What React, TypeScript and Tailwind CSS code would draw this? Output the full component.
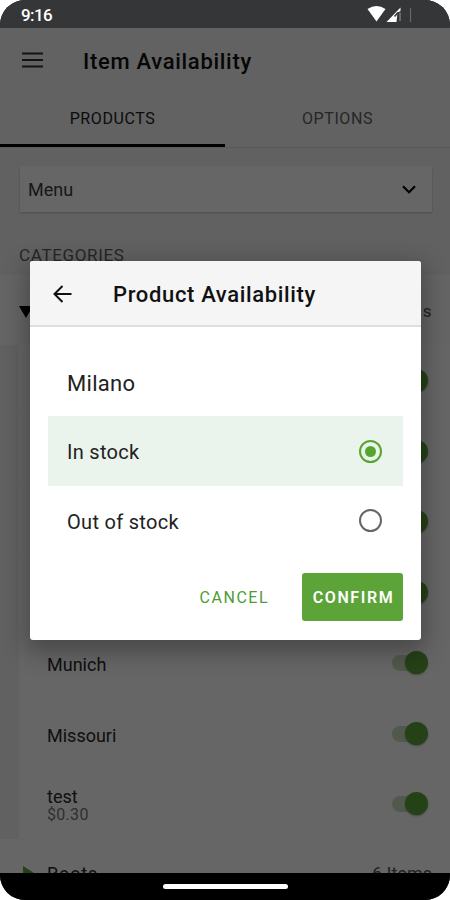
import { useState } from "react";
import clsx from "clsx";

const products = [
  { id: 1 },
  { id: 2 },
  { id: 3 },
  { id: 4 },
  { id: 5, name: "Munich" },
  { id: 6, name: "Missouri" },
  { id: 7, name: "test", price: "$0.30" },
];

const stockOptions = ["In stock", "Out of stock"];

function StatusBar() {
  return (
    <div className="flex h-7 shrink-0 items-start justify-between bg-[#353638] pl-[21px] pr-[37px] text-white">
      <span className="mt-[3px] text-[17px] font-medium leading-6 tracking-[-0.6px]">9:16</span>
      <svg className="mt-[5px]" width="46" height="19" viewBox="0 0 46 19">
        <path d="M0.500 4Q9.500 -2.200 18.500 4L9.500 16.500Z" fill="#fff" />
        <path d="M19.500 17L33.500 2.500V6L30.500 7.500L29.500 17Z" fill="#fff" />
        <path d="M27.500 11.500L31 7.500M31.500 9.500V16.500" fill="none" stroke="#353638" strokeWidth="1.500" />
        <path d="M33 7.500V16" stroke="#999" />
        <path d="M43.500 3V17" stroke="#66686a" strokeWidth="1.200" />
      </svg>
    </div>
  );
}

function Toggle() {
  return (
    <div className="relative mt-[3px] h-6 w-9">
      <div className="absolute left-0 top-1 h-4 w-7 rounded-full bg-[#cbdfc0]" />
      <div className="absolute right-0 top-0 size-[23px] rounded-full bg-[#5ca338] shadow-[0_1px_2px_rgba(0,0,0,0.3)]" />
    </div>
  );
}

function AvailabilityPage() {
  return (
    <div className="flex min-h-0 flex-1 flex-col overflow-hidden bg-[#f2f2f2] text-[#282828]">
      <header className="flex h-[61px] shrink-0 items-center bg-[#f5f5f5] pl-[22px] pt-1">
        <svg className="-mt-[2px]" width="21" height="16" viewBox="0 0 21 16" stroke="#303030" strokeWidth="2">
          <path d="M0 1.500H21M0 8H21M0 14.500H21" />
        </svg>
        <h1 className="ml-10 mt-[2px] text-[22px] font-medium tracking-[0.7px] text-[#101010]">Item Availability</h1>
      </header>

      <nav className="flex h-[59px] shrink-0 border-b border-[#dedede] bg-[#f5f5f5] text-[16px] tracking-[0.6px]">
        <button className="w-1/2 border-b-[3px] border-black pt-[5px] font-[450] text-[#202020]">PRODUCTS</button>
        <button className="w-1/2 pt-[2px] text-[#606060]">OPTIONS</button>
      </nav>

      <div className="mx-5 mr-[18px] mt-[18px] flex h-[46px] shrink-0 items-center justify-between bg-white pl-2 pr-4 shadow-[0_1px_2px_rgba(0,0,0,0.2)]">
        <span className="text-[18px] text-[#3a3a3a]">Menu</span>
        <svg width="14" height="9" viewBox="0 0 14 9" fill="none" stroke="#000" strokeWidth="2.200">
          <path d="M1 1.200L7 7.200L13 1.200" />
        </svg>
      </div>

      <div className="mt-[31px] h-8 shrink-0 pl-[19px] text-[17px] leading-6 tracking-[0.65px] text-[#606060]">
        CATEGORIES
      </div>

      <div className="flex h-[70px] shrink-0 items-center bg-[#fcfcfc] pl-[19px] pr-[18px] pt-[3px]">
        <svg width="14" height="12" viewBox="0 0 14 12">
          <path d="M0 0H14L7 12Z" fill="#000" />
        </svg>
        <span className="ml-auto text-[17px] tracking-[0.6px] text-[#555]">s</span>
      </div>

      <div className="shrink-0 pl-[19px]">
        {products.map((product) => (
          <div
            key={product.id}
            className="flex h-[70.500px] items-center justify-between border-b border-[#f9f9f9] bg-white pl-7 pr-[22px]"
          >
            <div className={clsx(product.price ? "pt-[5px]" : "pt-[6px]")}>
              <p className="text-[18px] leading-[19px]">{product.name}</p>
              {product.price && (
                <p className="text-[16px] leading-[17px] tracking-[0.3px] text-[#777]">{product.price}</p>
              )}
            </div>
            <Toggle />
          </div>
        ))}
      </div>

      <div className="flex h-[69px] shrink-0 items-center bg-white pl-[23px] pr-[18px]">
        <svg width="11" height="14" viewBox="0 0 11 14">
          <path d="M0 0L11 7L0 14Z" fill="#5ca338" />
        </svg>
        <span className="ml-[13px] text-[18px] tracking-[0.9px]">Roots</span>
        <span className="ml-auto text-[18px] text-[#555]">6 Items</span>
      </div>
    </div>
  );
}

function ProductDialog() {
  const [selected, setSelected] = useState("In stock");

  return (
    <div className="absolute left-[30px] top-[261px] flex h-[379px] w-[391px] flex-col overflow-hidden rounded-[3px] bg-white shadow-[0_8px_24px_4px_rgba(0,0,0,0.3)]">
      <header className="flex h-[66px] items-center border-b-2 border-[#dedede] bg-[#f5f5f5] pl-[23px]">
        <svg className="mt-px" width="19" height="18" viewBox="0 0 19 18" fill="none" stroke="#111" strokeWidth="2">
          <path d="M9.500 1L1.500 9L9.500 17M1.500 9H18.500" />
        </svg>
        <h2 className="ml-[41px] mt-[3px] text-[22px] font-medium tracking-[0.65px] text-[#111]">
          Product Availability
        </h2>
      </header>

      <div className="px-[18px] pt-[23px] text-[20px] tracking-[0.3px] text-[#222]">
        <p className="flex h-[66px] items-center pl-[19px] text-[22px] tracking-[0.3px]">Milano</p>
        {stockOptions.map((option) => (
          <button
            key={option}
            onClick={() => setSelected(option)}
            className={clsx(
              "flex h-[69.500px] w-full items-center justify-between pl-[19px] pr-[21px]",
              option === selected ? "bg-[#ebf3ed]" : "bg-white",
            )}
          >
            <span className="mt-[3px]">{option}</span>
            <span
              className={clsx(
                "mt-px flex size-[23px] items-center justify-center rounded-full border-2",
                option === selected ? "border-[#55a630]" : "border-[#666]",
              )}
            >
              {option === selected && <span className="size-[11px] rounded-full bg-[#55a630]" />}
            </span>
          </button>
        ))}
      </div>

      <div className="mt-[18px] flex h-12 items-center justify-end pr-[18px] text-[16px] font-medium tracking-[1.5px]">
        <button className="mr-[33px] pt-[2px] font-[450] text-[#4f9c35]">CANCEL</button>
        <button className="h-12 w-[101px] rounded-[3px] bg-[#5ca338] pl-[2px] pt-[2px] font-semibold tracking-[1.6px] text-white">
          CONFIRM
        </button>
      </div>
    </div>
  );
}

export default function App() {
  return (
    <div className="h-[900px] w-[450px] overflow-hidden bg-white font-[Roboto,sans-serif]">
      <div className="relative flex h-full flex-col overflow-hidden rounded-[25px] bg-black">
        <StatusBar />
        <div className="relative flex min-h-0 flex-1 flex-col">
          <AvailabilityPage />
          <div className="absolute inset-0 bg-black/60" />
        </div>
        <div className="flex h-[27px] shrink-0 items-center justify-center bg-black">
          <div className="h-[5px] w-[125px] rounded-full bg-white" />
        </div>
        <ProductDialog />
      </div>
    </div>
  );
}
